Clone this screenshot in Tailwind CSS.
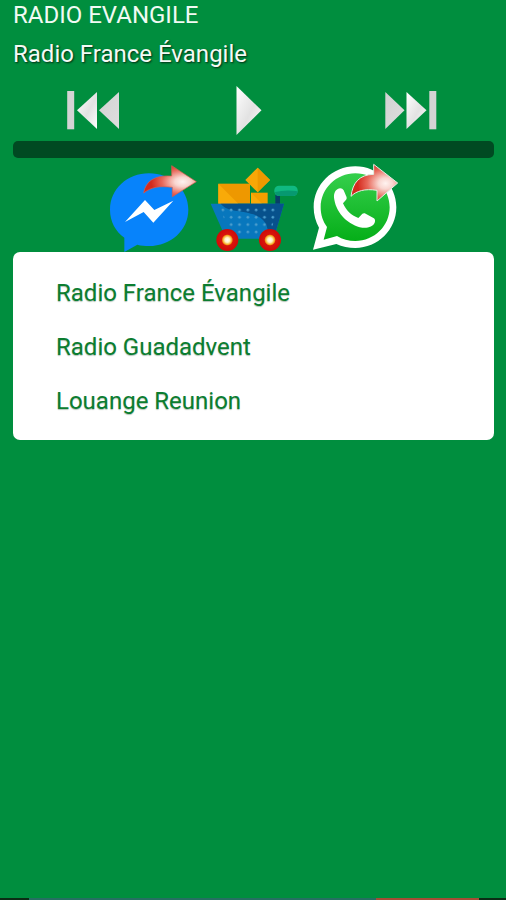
<!DOCTYPE html>
<html lang="fr">
<head>
  <meta charset="UTF-8" />
  <meta name="viewport" content="width=device-width, initial-scale=1.0"/>
  <title>Radio Evangile</title>
  <script src="https://cdn.jsdelivr.net/npm/@tailwindcss/browser@4"></script>
</head>
<body class="bg-[#008e3e] font-['Roboto',sans-serif] text-[24px]">
  <div class="h-[900px] flex flex-col overflow-hidden">
    <h1 class="h-[30px] pl-[13px] leading-[30px] text-[#f1faf3] whitespace-nowrap">RADIO EVANGILE</h1>
    <p class="h-[48px] pl-[13px] leading-[48px] text-[#f4faf5] whitespace-nowrap text-shadow-[1px_1px_2px_rgb(0_0_0/0.7)]">Radio France Évangile</p>

    <!-- Lecteur -->
    <div class="h-[63px] flex items-center pl-[66px]">
      <button class="w-[169px]" aria-label="Précédent">
        <svg class="block w-[54px] h-[42px]" viewBox="0 0 54 42">
          <defs>
            <linearGradient id="gris" x1="0" y1="0" x2="1" y2="1">
              <stop offset="0" stop-color="#d2d2d2"/><stop offset="1" stop-color="#dedede"/>
            </linearGradient>
            <linearGradient id="clair" x1="0" y1="0" x2="1" y2="1">
              <stop offset="0" stop-color="#ffffff"/><stop offset=".55" stop-color="#e2e2e2"/><stop offset="1" stop-color="#ffffff"/>
            </linearGradient>
          </defs>
          <rect x="1.2" y="2" width="7" height="38.3" fill="#d4d4d4"/>
          <path d="M31 3v37L11 21.3z" fill="url(#clair)"/>
          <path d="M53 3v37L33 21.3z" fill="url(#gris)"/>
        </svg>
      </button>
      <button class="w-[149px]" aria-label="Lecture">
        <svg class="block w-[28px] h-[52px]" viewBox="0 0 28 52">
          <path d="M1.500 2v49L26.500 26.3z" fill="url(#clair)"/>
        </svg>
      </button>
      <button aria-label="Suivant">
        <svg class="block w-[53px] h-[42px]" viewBox="0 0 53 42">
          <path d="M1.3 3v37L20.5 21.3z" fill="url(#gris)"/>
          <path d="M22.5 3v37L42.5 21.3z" fill="url(#clair)"/>
          <rect x="45.3" y="2" width="7" height="38.3" fill="#d4d4d4"/>
        </svg>
      </button>
    </div>
    <div class="ml-[13px] mr-[12px] h-[17px] rounded-[5px] bg-[#004a22]"></div>

    <!-- Partage -->
    <div class="mt-[2px] flex pl-[100px]">
      <svg class="block w-[100px] h-[92px] overflow-visible" viewBox="0 0 300 276">
        <defs>
          <radialGradient id="fleche" cx=".74" cy=".52" r=".6">
            <stop offset="0" stop-color="#fff3f0"/><stop offset=".25" stop-color="#f9d6d0"/><stop offset=".65" stop-color="#e8695b"/><stop offset="1" stop-color="#d42a1d"/>
          </radialGradient>
        </defs>
        <path d="M147 40C82 40 30 87 30 149c0 36 17 65 43 84v43l39-22c11 3 23 4 35 4 65 0 118-47 118-109S212 40 147 40z" fill="#0783fb"/>
        <path d="M75 186l60-66 28 30 57-28-60 66-29-32z" fill="#fff"/>
        <path d="M131 99C137 62 165 45 215 48V17l74 48-72 45V82c-37-5-64-1-86 17z" fill="url(#fleche)" stroke="#d95f50" stroke-width="2"/>
      </svg>
      <svg class="block w-[105px] h-[92px]" viewBox="0 0 315 276">
        <defs>
          <pattern id="points" x="60" y="141" width="25" height="22" patternUnits="userSpaceOnUse">
            <circle cx="8.5" cy="9" r="4" fill="#4b9dcd"/>
          </pattern>
          <radialGradient id="roue">
            <stop offset="0" stop-color="#fff"/><stop offset=".22" stop-color="#fff2c0"/><stop offset=".42" stop-color="#f4a51c"/><stop offset=".52" stop-color="#d8160c"/><stop offset="1" stop-color="#cf0a08"/>
          </radialGradient>
        </defs>
        <path d="M173 23l37 37-37 37-37-37z" fill="#f8a707"/>
        <path d="M173 23l37 37-37 37z" fill="#ee9900"/>
        <path d="M55 71h95v60H55z" fill="#ee9800"/>
        <path d="M55 131V71l60 60z" fill="#f9aa08"/>
        <path d="M153 98h50v33h-50z" fill="#f39f00"/>
        <path d="M153 131V98l33 33z" fill="#f9aa08"/>
        <path d="M226 103h14v32h-14z" fill="#073e68"/>
        <rect x="223" y="77" width="70" height="31" rx="14" fill="#10b981"/>
        <path d="M225 96q34-8 68-2c0 8-5 14-14 14h-42c-7 0-12-5-12-12z" fill="#079970"/>
        <path d="M32 131h220l-31 105H78z" fill="#0877bd"/>
        <path d="M62 131h190l-31 105h-16c1-40-10-60-45-73-38-14-76-5-98-32z" fill="#07518c"/>
        <path d="M61 141h171l-22 87H88z" fill="url(#points)"/>
        <circle cx="82" cy="240" r="33" fill="url(#roue)"/>
        <circle cx="210" cy="240" r="33" fill="url(#roue)"/>
      </svg>
      <svg class="block w-[105px] h-[92px]" viewBox="0 0 315 276">
        <defs>
          <linearGradient id="vert" x1="0" y1="0" x2="0" y2="1">
            <stop offset="0" stop-color="#35cf4c"/><stop offset="1" stop-color="#05ae18"/>
          </linearGradient>
        </defs>
        <path d="M151 19C82 19 26 74 26 142c0 22 6 43 16 61L24 269l70-17c17 8 37 12 57 12 68 0 123-55 123-122S219 19 151 19z" fill="#fff"/>
        <path d="M151 40C94 40 47 86 47 142c0 23 7 43 19 59l-10 38 40-11c16 10 35 15 55 15 57 0 103-45 103-101S208 40 151 40z" fill="url(#vert)"/>
        <path d="M97 88c-8 5-12 16-9 31 7 42 44 77 84 84 17 2 32-4 37-15 3-8 1-12-5-15l-22-12c-6-3-10-1-14 5l-8 8c-22-8-37-23-46-44l8-9c4-5 4-8 1-14l-7-16c-4-7-12-8-19-3z" fill="#fff"/>
        <path d="M138 109C143 67 164 44 206 43V13l72 56-62 54V91c-37-6-62 2-78 18z" fill="url(#fleche)" stroke="#e0f0e4" stroke-width="3" stroke-linejoin="round"/>
      </svg>
    </div>

    <!-- Liste des stations -->
    <ul class="ml-[13px] mr-[12px] h-[188px] rounded-[7px] bg-white pl-[43px] pt-[14px] text-[#0b7d30] text-shadow-[0_1px_1px_rgb(0_60_20/0.3)]">
      <li class="h-[54px] leading-[54px]">Radio France Évangile</li>
      <li class="h-[54px] leading-[54px]">Radio Guadadvent</li>
      <li class="h-[54px] leading-[54px]">Louange Reunion</li>
    </ul>

    <!-- Bandeau bas -->
    <div class="mt-auto h-[2px] flex">
      <div class="w-[29px] bg-[#0b2d15]"></div>
      <div class="flex-1 bg-[#256f62]"></div>
      <div class="w-[103px] bg-[#a54c35]"></div>
      <div class="w-[27px] bg-[#0b2d15]"></div>
    </div>
  </div>
</body>
</html>
